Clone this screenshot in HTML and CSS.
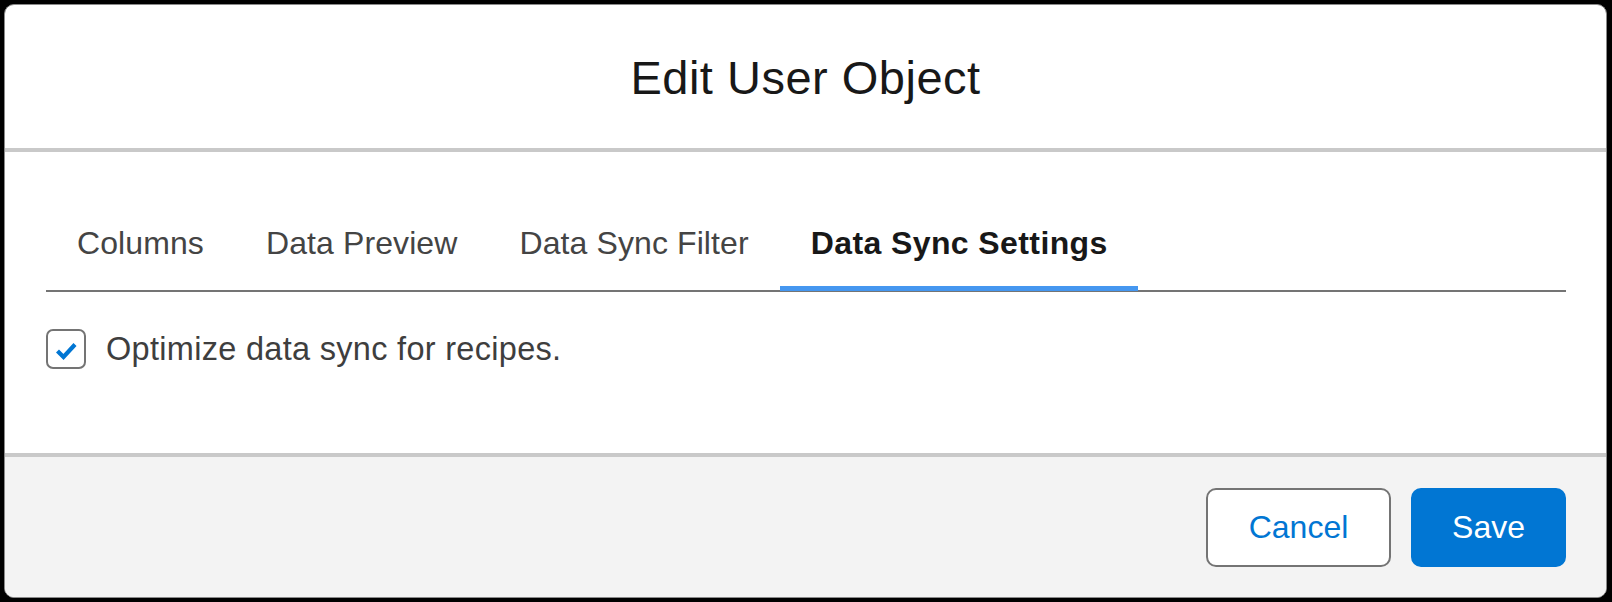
FILE: index.html
```html
<!DOCTYPE html>
<html lang="en">
<head>
<meta charset="utf-8">
<title>Edit User Object</title>
<link rel="stylesheet" href="styles.css">
</head>
<body>
<div class="modal">
  <header class="modal-header">
    <h1 class="modal-title">Edit User Object</h1>
  </header>
  <section class="modal-body">
    <nav class="tabs">
      <div class="tab">Columns</div>
      <div class="tab">Data Preview</div>
      <div class="tab">Data Sync Filter</div>
      <div class="tab tab-active">Data Sync Settings</div>
    </nav>
    <label class="check-row">
      <svg class="checkbox" width="40" height="40" viewBox="0 0 40 40">
        <rect x="1" y="1" width="38" height="38" rx="6" ry="6" fill="#fff" stroke="#747474" stroke-width="2"/>
        <polyline points="11.5,22 17.5,28 29,15.5" fill="none" stroke="#0176d3" stroke-width="4.2" stroke-linejoin="miter"/>
      </svg>
      <span class="check-label">Optimize data sync for recipes.</span>
    </label>
  </section>
  <footer class="modal-footer">
    <button class="btn btn-neutral">Cancel</button>
    <button class="btn btn-brand">Save</button>
  </footer>
</div>
</body>
</html>
```
FILE: styles.css
```css
html, body {
  margin: 0;
  padding: 0;
}
body {
  background: #000;
  width: 1612px;
  height: 602px;
  overflow: hidden;
  font-family: "Liberation Sans", Arial, sans-serif;
}
.modal {
  margin: 4px 5px 4px 4px;
  height: 594px;
  box-sizing: border-box;
  border: 1px solid #8a8a8a;
  border-radius: 10px;
  background: #fff;
  overflow: hidden;
  display: flex;
  flex-direction: column;
}
.modal-header {
  height: 147px;
  box-sizing: border-box;
  border-bottom: 4px solid #c9c9c9;
  display: flex;
  align-items: center;
  justify-content: center;
}
.modal-title {
  margin: 0;
  font-size: 47px;
  font-weight: normal;
  letter-spacing: 0.5px;
  color: #181818;
  line-height: 56px;
  padding-top: 2px;
}
.modal-body {
  height: 301px;
  box-sizing: border-box;
  padding: 71px 40px 0 41px;
}
.tabs {
  display: flex;
  border-bottom: 2px solid #747474;
}
.tab {
  position: relative;
  padding: 0 31px 27px;
  font-size: 32px;
  line-height: 40px;
  letter-spacing: 0.1px;
  color: #444;
}
.tab-active {
  padding: 0 30px 27px 31px;
  color: #181818;
  font-weight: bold;
  letter-spacing: 0.4px;
}
.tab-active::after {
  content: "";
  position: absolute;
  left: 0;
  right: 0;
  bottom: -1px;
  height: 5px;
  background: #4597f0;
}
.check-row {
  display: flex;
  align-items: center;
  gap: 20px;
  margin-top: 37px;
}
.checkbox {
  display: block;
  flex: none;
}
.check-label {
  font-size: 32.5px;
  line-height: 40px;
  letter-spacing: 0.3px;
  color: #3e3e3e;
}
.modal-footer {
  flex: 1;
  background: #f3f3f3;
  border-top: 4px solid #c9c9c9;
  display: flex;
  align-items: center;
  justify-content: flex-end;
  gap: 20px;
  padding-right: 40px;
}
.btn {
  height: 79px;
  box-sizing: border-box;
  border-radius: 10px;
  font-family: "Liberation Sans", Arial, sans-serif;
  font-size: 32px;
  border: 2px solid #747474;
  padding: 0;
  cursor: pointer;
}
.btn-neutral {
  width: 185px;
  background: #fff;
  color: #0176d3;
}
.btn-brand {
  width: 155px;
  background: #0176d3;
  border-color: #0176d3;
  color: #fff;
}
```
